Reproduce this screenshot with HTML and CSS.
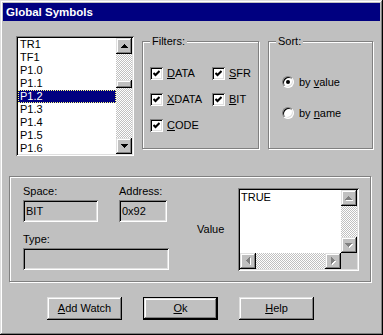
FILE: index.html
```html
<!DOCTYPE html>
<html lang="en">
<head>
    <meta charset="UTF-8">
    <title>Global Symbols</title>
    <link rel="stylesheet" href="styles.css">
</head>
<body>
    <div class="window">
        <div class="titlebar">Global Symbols</div>

        <div class="content">
            <div class="top-row">
                <!-- symbol list -->
                <div class="listbox sunken">
                    <ul class="items">
                        <li>TR1</li>
                        <li>TF1</li>
                        <li>P1.0</li>
                        <li>P1.1</li>
                        <li class="selected">P1.2</li>
                        <li>P1.3</li>
                        <li>P1.4</li>
                        <li>P1.5</li>
                        <li>P1.6</li>
                    </ul>
                    <div class="vscroll">
                        <div class="sb-btn raised">
                            <svg width="7" height="4" viewBox="0 0 7 4"><path d="M3 0h1v1h1v1h1v1h1v1H0V3h1V2h1V1h1z" fill="#000"/></svg>
                        </div>
                        <div class="track"><div class="thumb raised"></div></div>
                        <div class="sb-btn raised">
                            <svg width="7" height="4" viewBox="0 0 7 4"><path d="M0 0h7v1H6v1H5v1H4v1H3V3H2V2H1V1H0z" fill="#000"/></svg>
                        </div>
                    </div>
                </div>

                <div class="group filters">
                    <span class="legend">Filters:</span>
                    <div class="check-grid">
                        <div class="check"><span class="checkbox"><svg width="7" height="7" viewBox="0 0 7 7"><polyline points="0.5,3 2.5,5 6.5,1" fill="none" stroke="#000" stroke-width="2"/></svg></span><span><u>D</u>ATA</span></div>
                        <div class="check"><span class="checkbox"><svg width="7" height="7" viewBox="0 0 7 7"><polyline points="0.5,3 2.5,5 6.5,1" fill="none" stroke="#000" stroke-width="2"/></svg></span><span><u>S</u>FR</span></div>
                        <div class="check"><span class="checkbox"><svg width="7" height="7" viewBox="0 0 7 7"><polyline points="0.5,3 2.5,5 6.5,1" fill="none" stroke="#000" stroke-width="2"/></svg></span><span><u>X</u>DATA</span></div>
                        <div class="check"><span class="checkbox"><svg width="7" height="7" viewBox="0 0 7 7"><polyline points="0.5,3 2.5,5 6.5,1" fill="none" stroke="#000" stroke-width="2"/></svg></span><span><u>B</u>IT</span></div>
                        <div class="check"><span class="checkbox"><svg width="7" height="7" viewBox="0 0 7 7"><polyline points="0.5,3 2.5,5 6.5,1" fill="none" stroke="#000" stroke-width="2"/></svg></span><span><u>C</u>ODE</span></div>
                    </div>
                </div>

                <div class="group sort">
                    <span class="legend">Sort:</span>
                    <div class="radios">
                        <div class="option"><span class="radio"><span class="dot"></span></span><span>by <u>v</u>alue</span></div>
                        <div class="option"><span class="radio"></span><span>by <u>n</u>ame</span></div>
                    </div>
                </div>
            </div>

            <!-- details of selected symbol -->
            <div class="group details">
                <div class="fields">
                    <div class="field-row">
                        <div class="field">
                            <label>Space:</label>
                            <div class="textbox sunken space-box">BIT</div>
                        </div>
                        <div class="field">
                            <label>Address:</label>
                            <div class="textbox sunken address-box">0x92</div>
                        </div>
                    </div>
                    <div class="field type-field">
                        <label>Type:</label>
                        <div class="textbox sunken type-box"></div>
                    </div>
                </div>

                <div class="value-label">Value</div>

                <div class="value-box sunken">
                    <div class="value-text">TRUE</div>
                    <div class="vscroll">
                        <div class="sb-btn raised">
                            <svg width="8" height="5" viewBox="0 0 8 5"><path d="M4 1h1v1h1v1h1v1h1v1H1V4h1V3h1V2h1z" fill="#fff"/><path d="M3 0h1v1h1v1h1v1h1v1H0V3h1V2h1V1h1z" fill="#808080"/></svg>
                        </div>
                        <div class="track"></div>
                        <div class="sb-btn raised">
                            <svg width="8" height="5" viewBox="0 0 8 5"><path d="M1 1h7v1H7v1H6v1H5v1H4V4H3V3H2V2H1z" fill="#fff"/><path d="M0 0h7v1H6v1H5v1H4v1H3V3H2V2H1V1H0z" fill="#808080"/></svg>
                        </div>
                    </div>
                    <div class="hscroll">
                        <div class="sb-btn raised">
                            <svg width="5" height="8" viewBox="0 0 5 8"><path d="M4 1h1v7H4V7H3V6H2V5H1V4h1V3h1V2h1z" fill="#fff"/><path d="M3 0h1v7H3V6H2V5H1V4H0V3h1V2h1V1h1z" fill="#808080"/></svg>
                        </div>
                        <div class="track"></div>
                        <div class="sb-btn raised">
                            <svg width="5" height="8" viewBox="0 0 5 8"><path d="M1 1h1v1h1v1h1v1h1v1H4v1H3v1H2v1H1z" fill="#fff"/><path d="M0 0h1v1h1v1h1v1h1v1H3v1H2v1H1v1H0z" fill="#808080"/></svg>
                        </div>
                    </div>
                    <div class="corner"></div>
                </div>
            </div>

            <div class="buttons">
                <div class="btn raised"><u>A</u>dd Watch</div>
                <div class="btn raised default"><u>O</u>k</div>
                <div class="btn raised"><u>H</u>elp</div>
            </div>
        </div>
    </div>
</body>
</html>
```

FILE: styles.css
```css
body {
    margin: 0;
    background-color: #c0c0c0;
    font-family: "Liberation Sans", Arial, sans-serif;
    font-size: 11px;
    color: #000;
}

.window {
    width: 383px;
    height: 335px;
    box-sizing: border-box;
    padding: 3px;
    background-color: #c0c0c0;
    box-shadow: inset -1px -1px #000, inset 1px 1px #dfdfdf, inset -2px -2px #808080, inset 2px 2px #fff;
}

.titlebar {
    height: 18px;
    line-height: 18px;
    padding-left: 3px;
    background-color: #000080;
    color: #fff;
    font-weight: bold;
    font-size: 11.5px;
}

/* 3d edges */
.sunken {
    box-shadow: inset 1px 1px #808080, inset -1px -1px #fff, inset 2px 2px #000, inset -2px -2px #dfdfdf;
}

.raised {
    box-shadow: inset -1px -1px #000, inset 1px 1px #dfdfdf, inset -2px -2px #808080, inset 2px 2px #fff;
}

.content {
    padding-top: 15px;
}

.top-row {
    display: flex;
    align-items: flex-start;
    margin-left: 13px;
}

/* list box */
.listbox {
    width: 118px;
    height: 120px;
    box-sizing: border-box;
    padding: 2px;
    background-color: #fff;
    display: flex;
}

.items {
    list-style: none;
    margin: 0;
    padding: 0;
    flex: 1;
    overflow: hidden;
}

.items li {
    height: 13px;
    line-height: 13px;
    padding-left: 2px;
}

.items li.selected {
    background-color: #000080;
    color: #fff;
    outline: 1px dotted #ffff80;
    outline-offset: -1px;
}

.vscroll {
    width: 16px;
    display: flex;
    flex-direction: column;
}

.hscroll {
    height: 16px;
    display: flex;
}

.sb-btn {
    width: 16px;
    height: 16px;
    flex: none;
    background-color: #c0c0c0;
    display: flex;
    align-items: center;
    justify-content: center;
}

.track {
    flex: 1;
    background: repeating-conic-gradient(#c0c0c0 0 25%, #fff 0 50%) 0 0 / 2px 2px;
}

.thumb {
    height: 8px;
    margin-top: 26px;
    background-color: #c0c0c0;
}

/* group boxes */
.group {
    box-sizing: border-box;
    border: 1px solid #808080;
    box-shadow: inset 1px 1px #fff, 1px 1px 0 #fff;
}

.legend {
    display: block;
    width: fit-content;
    margin: -7px 0 0 7px;
    padding: 0 2px;
    line-height: 13px;
    background-color: #c0c0c0;
}

.filters {
    width: 117px;
    height: 108px;
    margin: 5px 0 0 8px;
}

.check-grid {
    display: grid;
    grid-template-columns: 62px 1fr;
    grid-auto-rows: 26px;
    margin: 12px 0 0 7px;
}

.check {
    display: flex;
    align-items: center;
    gap: 4px;
}

.checkbox {
    width: 13px;
    height: 13px;
    box-sizing: border-box;
    background-color: #fff;
    box-shadow: inset 1px 1px #808080, inset -1px -1px #fff, inset 2px 2px #000, inset -2px -2px #dfdfdf;
    display: flex;
    align-items: center;
    justify-content: center;
}

.sort {
    width: 105px;
    height: 108px;
    margin: 5px 0 0 9px;
}

.radios {
    display: flex;
    flex-direction: column;
    gap: 15px;
    margin: 26px 0 0 13px;
}

.option {
    display: flex;
    align-items: center;
    gap: 5px;
    height: 16px;
}

.radio {
    width: 12px;
    height: 12px;
    box-sizing: border-box;
    border-radius: 50%;
    background-color: #fff;
    border: 1px solid;
    border-color: #808080 #fff #fff #808080;
    box-shadow: inset 1px 1px #000, inset -1px -1px #dfdfdf;
    display: flex;
    align-items: center;
    justify-content: center;
}

.dot {
    width: 4px;
    height: 4px;
    border-radius: 50%;
    background-color: #000;
}

/* details */
.details {
    width: 362px;
    height: 106px;
    margin: 20px 0 0 6px;
    padding: 8px 0 0 13px;
    display: flex;
    align-items: flex-start;
}

.fields {
    width: 146px;
}

.field-row {
    display: flex;
    gap: 21px;
}

.field label {
    display: block;
    line-height: 13px;
    margin-bottom: 2px;
}

.textbox {
    height: 22px;
    line-height: 22px;
    box-sizing: border-box;
    padding-left: 3px;
    background-color: #c0c0c0;
}

.space-box {
    width: 75px;
}

.address-box {
    width: 48px;
}

.type-field {
    margin-top: 11px;
}

.type-box {
    width: 146px;
}

.value-label {
    width: 41px;
    margin: 38px 0 0 28px;
    line-height: 13px;
}

.value-box {
    width: 121px;
    height: 83px;
    margin-top: 3px;
    box-sizing: border-box;
    padding: 2px;
    background-color: #fff;
    display: grid;
    grid-template-columns: 1fr 16px;
    grid-template-rows: 1fr 16px;
}

.value-text {
    padding: 1px 0 0 1px;
    line-height: 13px;
}

.corner {
    background-color: #c0c0c0;
}

/* buttons */
.buttons {
    display: flex;
    gap: 21px;
    margin: 15px 0 0 44px;
}

.btn {
    width: 75px;
    height: 23px;
    box-sizing: border-box;
    line-height: 23px;
    text-align: center;
    background-color: #c0c0c0;
}

.btn.default {
    border: 1px solid #000;
    line-height: 21px;
}
```
